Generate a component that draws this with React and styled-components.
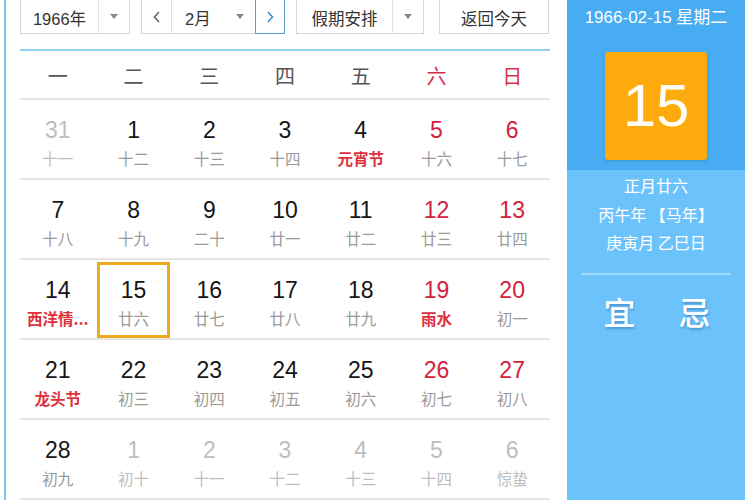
import React from "react";
import styled, { createGlobalStyle } from "styled-components";

const Global = createGlobalStyle`
  html, body { margin: 0; padding: 0; background: #fff; }
  body { font-family: "Liberation Sans", "Noto Sans CJK SC", sans-serif; }
  * { box-sizing: border-box; }
`;

const Page = styled.div`
  display: flex;
  width: 750px;
  height: 500px;
  overflow: hidden;
  background: #fff;
`;

const Calendar = styled.div`
  margin-left: 4px;
  border-left: 2px solid #7cc6ea;
  padding-left: 14px;
  width: 548px;
  display: flex;
  flex-direction: column;
`;

const Toolbar = styled.div`
  display: flex;
  height: 34px;
  width: 530px;
`;

const Box = styled.div`
  display: flex;
  height: 34px;
  width: ${(p) => p.$w}px;
  margin-left: ${(p) => p.$ml || 0}px;
  border: 1px solid #d6d6d6;
  border-top: none;
  background: #fff;
  color: #333;
  font-size: 16.5px;
`;

const Label = styled.div`
  flex: ${(p) => (p.$w ? `0 0 ${p.$w}px` : 1)};
  display: flex;
  align-items: center;
  justify-content: ${(p) => p.$justify || "center"};
  padding-left: ${(p) => p.$pl || 0}px;
  padding-top: 2px;
`;

const ArrowCell = styled.div`
  flex: 0 0 ${(p) => p.$w}px;
  display: flex;
  align-items: center;
  justify-content: center;
  border-left: ${(p) => (p.$divider ? "1px solid #e2e2e2" : "none")};
`;

const Caret = styled.span`
  width: 0;
  height: 0;
  border-left: 4px solid transparent;
  border-right: 4px solid transparent;
  border-top: 5px solid #8a8a8a;
`;

const NavButton = styled.div`
  flex: 0 0 30px;
  display: flex;
  align-items: center;
  justify-content: center;
  border-right: ${(p) => (p.$divider ? "1px solid #e2e2e2" : "none")};
  ${(p) =>
    p.$active &&
    `
    border: 1px solid #5b9fcf;
    border-top: none;
    margin: 0 -1px 0 0;
    height: 34px;
  `}
`;

const BlueRule = styled.div`
  margin-top: 15px;
  width: 530px;
  height: 2px;
  background: #8fd2f0;
`;

const WeekHeader = styled.div`
  display: grid;
  grid-template-columns: repeat(7, 1fr);
  width: 530px;
  height: 49px;
  border-bottom: 2px solid #e6e6e6;
`;

const WeekDay = styled.div`
  display: flex;
  align-items: center;
  justify-content: center;
  font-family: "Noto Sans CJK SC", sans-serif;
  font-size: 20px;
  color: ${(p) => (p.$red ? "#d3344c" : "#555")};
  padding-top: 2px;
`;

const Row = styled.div`
  display: grid;
  grid-template-columns: repeat(7, 1fr);
  width: 530px;
  height: 80px;
  border-bottom: 2px solid #e6e6e6;
`;

const Cell = styled.div`
  position: relative;
  display: flex;
  flex-direction: column;
  align-items: center;
  padding-top: 15px;
  ${(p) =>
    p.$selected &&
    `
    &::after {
      content: "";
      position: absolute;
      top: 2px; left: 1px; right: 1px; bottom: 0px;
      border: 3px solid #efaa22;
    }
  `}
`;

const DayNum = styled.div`
  font-size: 23px;
  line-height: 30px;
  color: ${(p) => (p.$other ? "#bdbdbd" : p.$red ? "#d3213c" : "#151515")};
`;

const Lunar = styled.div`
  font-family: "Noto Sans CJK SC", sans-serif;
  font-size: 15.5px;
  line-height: 27px;
  white-space: nowrap;
  color: ${(p) => (p.$fest ? "#e0303c" : p.$other ? "#bdbdbd" : "#9a9a9a")};
  font-weight: ${(p) => (p.$fest ? 600 : 400)};
`;

const Sidebar = styled.div`
  margin-left: 15px;
  width: 178px;
  display: flex;
  flex-direction: column;
  color: #fff;
`;

const SideTop = styled.div`
  height: 170px;
  background: #47acf1;
  display: flex;
  flex-direction: column;
  align-items: center;
`;

const DateLine = styled.div`
  font-size: 17px;
  line-height: 20px;
  margin-top: 8px;
`;

const DayBox = styled.div`
  margin-top: 24px;
  width: 102px;
  height: 108px;
  background: #fdaa0c;
  border-radius: 3px;
  box-shadow: 0 1px 2px rgba(0, 0, 0, 0.15);
  display: flex;
  align-items: center;
  justify-content: center;
  font-size: 60px;
  color: #fffdf6;
  padding-bottom: 2px;
`;

const SideBottom = styled.div`
  flex: 1;
  background: #6cc3fb;
  display: flex;
  flex-direction: column;
  align-items: center;
  padding-top: 1px;
`;

const InfoLine = styled.div`
  font-family: "Noto Sans CJK SC", sans-serif;
  font-size: 16px;
  line-height: 28.5px;
`;

const Separator = styled.div`
  margin-top: 16px;
  width: 150px;
  height: 2px;
  background: #9fd8fc;
`;

const YiJi = styled.div`
  margin-top: 16px;
  display: flex;
  gap: 43px;
  font-family: "Noto Sans CJK SC", sans-serif;
  font-size: 32px;
  line-height: 40px;
  font-weight: 500;
  text-shadow: 1px 2px 2px rgba(40, 100, 170, 0.45);
  padding-left: 2px;
`;

const Chevron = ({ dir, color }) => (
  <svg width="10" height="14" viewBox="0 0 10 14">
    <path
      d={dir === "left" ? "M7 2 L2.5 7 L7 12" : "M3 2 L7.5 7 L3 12"}
      fill="none"
      stroke={color}
      strokeWidth="1.6"
    />
  </svg>
);

const weekDays = ["一", "二", "三", "四", "五", "六", "日"];

const rows = [
  [["31", "十一", "o"], ["1", "十二"], ["2", "十三"], ["3", "十四"], ["4", "元宵节", "f"], ["5", "十六"], ["6", "十七"]],
  [["7", "十八"], ["8", "十九"], ["9", "二十"], ["10", "廿一"], ["11", "廿二"], ["12", "廿三"], ["13", "廿四"]],
  [["14", "西洋情...", "f"], ["15", "廿六", "s"], ["16", "廿七"], ["17", "廿八"], ["18", "廿九"], ["19", "雨水", "f"], ["20", "初一"]],
  [["21", "龙头节", "f"], ["22", "初三"], ["23", "初四"], ["24", "初五"], ["25", "初六"], ["26", "初七"], ["27", "初八"]],
  [["28", "初九"], ["1", "初十", "o"], ["2", "十一", "o"], ["3", "十二", "o"], ["4", "十三", "o"], ["5", "十四", "o"], ["6", "惊蛰", "o"]],
];

export default function App() {
  return (
    <>
      <Global />
      <Page>
        <Calendar>
          <Toolbar>
            <Box $w={110}>
              <Label $w={77}>1966年</Label>
              <ArrowCell $w={31} $divider>
                <Caret />
              </ArrowCell>
            </Box>
            <Box $w={144} $ml={11}>
              <NavButton $divider>
                <Chevron dir="left" color="#666" />
              </NavButton>
              <Label $justify="flex-start" $pl={13}>2月</Label>
              <ArrowCell $w={30}>
                <Caret />
              </ArrowCell>
              <NavButton $active>
                <Chevron dir="right" color="#3a8fd0" />
              </NavButton>
            </Box>
            <Box $w={128} $ml={11}>
              <Label $w={95}>假期安排</Label>
              <ArrowCell $w={31} $divider>
                <Caret />
              </ArrowCell>
            </Box>
            <Box $w={110} $ml={15}>
              <Label>返回今天</Label>
            </Box>
          </Toolbar>
          <BlueRule />
          <WeekHeader>
            {weekDays.map((d, i) => (
              <WeekDay key={d} $red={i >= 5}>
                {d}
              </WeekDay>
            ))}
          </WeekHeader>
          {rows.map((row, ri) => (
            <Row key={ri}>
              {row.map(([n, l, flag], ci) => (
                <Cell key={ci} $selected={flag === "s"}>
                  <DayNum $other={flag === "o"} $red={ci >= 5}>
                    {n}
                  </DayNum>
                  <Lunar $fest={flag === "f"} $other={flag === "o"}>
                    {l}
                  </Lunar>
                </Cell>
              ))}
            </Row>
          ))}
        </Calendar>
        <Sidebar>
          <SideTop>
            <DateLine>1966-02-15 星期二</DateLine>
            <DayBox>15</DayBox>
          </SideTop>
          <SideBottom>
            <InfoLine>正月廿六</InfoLine>
            <InfoLine>丙午年 【马年】</InfoLine>
            <InfoLine>庚寅月 乙巳日</InfoLine>
            <Separator />
            <YiJi>
              <span>宜</span>
              <span>忌</span>
            </YiJi>
          </SideBottom>
        </Sidebar>
      </Page>
    </>
  );
}
